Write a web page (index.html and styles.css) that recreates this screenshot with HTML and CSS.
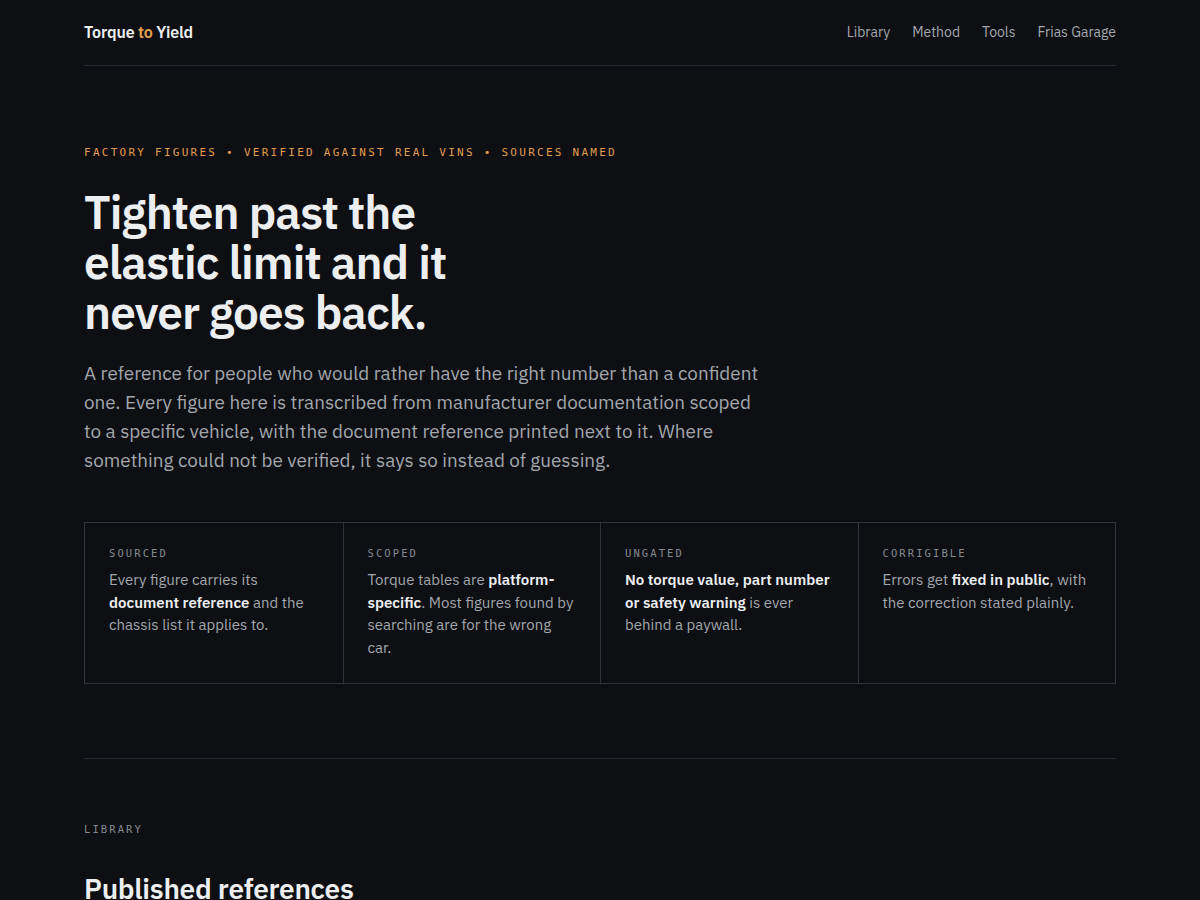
FILE: index.html
```html
<!DOCTYPE html>
<html lang="en">
<head>
<meta charset="utf-8">
<title>Torque to Yield</title>
<link rel="stylesheet" href="styles.css">
</head>
<body>
<div class="wrap">
  <header class="site-header">
    <a class="brand" href="#">Torque <span class="accent">to</span> Yield</a>
    <nav class="nav">
      <a href="#">Library</a>
      <a href="#">Method</a>
      <a href="#">Tools</a>
      <a href="#">Frias Garage</a>
    </nav>
  </header>

  <section class="hero">
    <p class="eyebrow">Factory figures • Verified against real VINs • Sources named</p>
    <h1 class="hero-title">Tighten past the elastic limit and it never goes back.</h1>
    <p class="lede">A reference for people who would rather have the right number than a confident one. Every figure here is transcribed from manufacturer documentation scoped to a specific vehicle, with the document reference printed next to it. Where something could not be verified, it says so instead of guessing.</p>

    <div class="principles">
      <div class="principle">
        <div class="label">Sourced</div>
        <p>Every figure carries its <strong>document reference</strong> and the chassis list it applies to.</p>
      </div>
      <div class="principle">
        <div class="label">Scoped</div>
        <p>Torque tables are <strong>platform-specific</strong>. Most figures found by searching are for the wrong car.</p>
      </div>
      <div class="principle">
        <div class="label">Ungated</div>
        <p><strong>No torque value, part number or safety warning</strong> is ever behind a paywall.</p>
      </div>
      <div class="principle">
        <div class="label">Corrigible</div>
        <p>Errors get <strong>fixed in public</strong>, with the correction stated plainly.</p>
      </div>
    </div>
  </section>

  <section class="library">
    <div class="label">Library</div>
    <h2 class="section-title">Published references</h2>
  </section>
</div>
</body>
</html>
```
FILE: styles.css
```css
* { box-sizing: border-box; }
html, body { margin: 0; padding: 0; }
body {
  background: #0d0f12;
  color: #e8e9eb;
  font-family: "IBM Plex Sans", Inter, "Noto Sans", sans-serif;
  -webkit-font-smoothing: antialiased;
}
a { color: inherit; text-decoration: none; }
.wrap {
  width: 1032px;
  margin: 0 auto;
}
.site-header {
  height: 66px;
  padding-bottom: 2px;
  display: flex;
  align-items: center;
  justify-content: space-between;
  border-bottom: 1px solid #262a2f;
}
.brand {
  font-size: 16px;
  font-weight: 600;
  color: #eceef0;
  letter-spacing: -0.01em;
}
.brand .accent { color: #e2a04f; }
.nav {
  display: flex;
  gap: 22px;
  font-size: 14px;
  color: #a4a8ae;
}
.hero {
  padding-top: 79px;
}
.eyebrow {
  margin: 0;
  font-family: "DejaVu Sans Mono", "Liberation Mono", monospace;
  font-size: 11px;
  line-height: 16px;
  letter-spacing: 2.26px;
  text-transform: uppercase;
  color: #e09d4f;
}
.hero-title {
  margin: 26px 0 0;
  width: 440px;
  font-size: 46px;
  line-height: 50px;
  font-weight: 600;
  letter-spacing: -0.02em;
  color: #eceef0;
}
.lede {
  margin: 22px 0 0;
  width: 680px;
  font-size: 18.9px;
  line-height: 29px;
  color: #a3a7ad;
}
.principles {
  margin-top: 47px;
  display: grid;
  grid-template-columns: repeat(4, 1fr);
  border: 1px solid #30343a;
}
.principle {
  padding: 22px 24px 24px;
  border-left: 1px solid #30343a;
}
.principle:first-child { border-left: none; }
.label {
  font-family: "DejaVu Sans Mono", "Liberation Mono", monospace;
  font-size: 10.5px;
  line-height: 16px;
  letter-spacing: 2.1px;
  text-transform: uppercase;
  color: #858a91;
}
.principle p {
  margin: 8px 0 0;
  font-size: 15px;
  line-height: 22.6px;
  color: #a3a7ad;
}
.principle strong {
  color: #eceef0;
  font-weight: 600;
}
.library {
  margin-top: 74px;
  border-top: 1px solid #262a2f;
  padding-top: 62px;
}
.section-title {
  margin: 34px 0 0;
  font-size: 28px;
  line-height: 36px;
  font-weight: 600;
  letter-spacing: -0.01em;
  color: #eceef0;
}
```
